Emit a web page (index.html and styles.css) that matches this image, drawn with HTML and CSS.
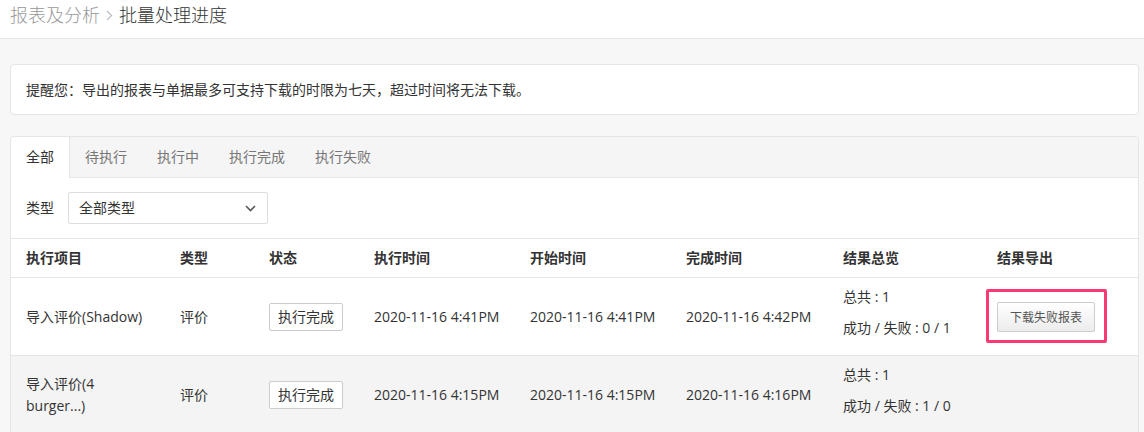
FILE: index.html
```html
<!DOCTYPE html>
<html lang="zh-CN">

<head>
    <meta charset="utf-8">
    <meta name="viewport" content="width=device-width, initial-scale=1">
    <title>批量处理进度</title>
    <link rel="stylesheet" href="styles.css">
</head>

<body>
    <div class="topbar">
        <span class="crumb">报表及分析</span>
        <svg class="crumb-sep" width="7" height="11" viewBox="0 0 7 11"><path d="M1 1l4.5 4.5L1 10" fill="none" stroke="#b8bcc4" stroke-width="1.2"/></svg>
        <span class="crumb current">批量处理进度</span>
    </div>

    <div class="main">
        <div class="notice">提醒您：导出的报表与单据最多可支持下载的时限为七天，超过时间将无法下载。</div>

        <div class="panel">
            <div class="tabs">
                <span class="tab active">全部</span>
                <span class="tab">待执行</span>
                <span class="tab">执行中</span>
                <span class="tab">执行完成</span>
                <span class="tab">执行失败</span>
            </div>

            <div class="filter">
                <span class="filter-label">类型</span>
                <div class="dropdown">
                    <span>全部类型</span>
                    <svg width="11" height="7" viewBox="0 0 11 7"><path d="M1 1l4.5 4.5L10 1" fill="none" stroke="#555" stroke-width="1.6"/></svg>
                </div>
            </div>

            <table class="jobs">
                <colgroup>
                    <col style="width:154px">
                    <col style="width:89px">
                    <col style="width:105px">
                    <col style="width:156px">
                    <col style="width:156px">
                    <col style="width:157px">
                    <col style="width:154px">
                    <col>
                </colgroup>
                <thead>
                    <tr>
                        <th>执行项目</th>
                        <th>类型</th>
                        <th>状态</th>
                        <th>执行时间</th>
                        <th>开始时间</th>
                        <th>完成时间</th>
                        <th>结果总览</th>
                        <th>结果导出</th>
                    </tr>
                </thead>
                <tbody>
                    <tr>
                        <td>导入评价(Shadow)</td>
                        <td>评价</td>
                        <td><span class="status">执行完成</span></td>
                        <td>2020-11-16 4:41PM</td>
                        <td>2020-11-16 4:41PM</td>
                        <td>2020-11-16 4:42PM</td>
                        <td>
                            <div class="sum">总共 : 1</div>
                            <div class="sum">成功 / 失败 : 0 / 1</div>
                        </td>
                        <td><span class="mark"><button class="btn">下载失败报表</button></span></td>
                    </tr>
                    <tr class="alt">
                        <td>导入评价(4 burger...)</td>
                        <td>评价</td>
                        <td><span class="status">执行完成</span></td>
                        <td>2020-11-16 4:15PM</td>
                        <td>2020-11-16 4:15PM</td>
                        <td>2020-11-16 4:16PM</td>
                        <td>
                            <div class="sum">总共 : 1</div>
                            <div class="sum">成功 / 失败 : 1 / 0</div>
                        </td>
                        <td></td>
                    </tr>
                </tbody>
            </table>
        </div>
    </div>
</body>

</html>
```

FILE: styles.css
```css
  * {
      box-sizing: border-box;
  }

  body {
      margin: 0;
      background: #f7f7f7;
      color: #333;
      font-family: "Open Sans", "Noto Sans CJK SC", sans-serif;
      font-size: 14px;
      line-height: 20px;
  }

  .topbar {
      display: flex;
      align-items: center;
      gap: 6px;
      height: 39px;
      padding: 0 10px 8px;
      background: #fff;
      border-bottom: 1px solid #e5e5e5;
  }

  .crumb {
      font-size: 18px;
      font-weight: 300;
      line-height: 24px;
      color: #999;
  }

  .crumb.current {
      color: #333;
  }

  .crumb-sep {
      margin: 1px 0 0;
  }

  .main {
      padding: 25px 5px 0 10px;
  }

  .notice {
      background: #fff;
      border: 1px solid #e5e5e5;
      border-radius: 4px;
      padding: 14px 15px;
      line-height: 21px;
      margin-bottom: 21px;
  }

  .panel {
      background: #fff;
      border: 1px solid #e5e5e5;
      border-radius: 4px 4px 0 0;
  }

  .tabs {
      display: flex;
      height: 41px;
      background: #f5f5f5;
      border-bottom: 1px solid #e5e5e5;
      border-radius: 4px 4px 0 0;
  }

  .tab {
      padding: 0 15px;
      line-height: 40px;
      color: #777;
  }

  .tab.active {
      height: 41px;
      background: #fff;
      color: #333;
      border-right: 1px solid #e5e5e5;
      border-radius: 4px 0 0 0;
  }

  .filter {
      display: flex;
      align-items: center;
      gap: 14px;
      padding: 14px 15px;
  }

  .dropdown {
      display: flex;
      align-items: center;
      justify-content: space-between;
      width: 200px;
      height: 32px;
      padding: 0 11px 0 10px;
      border: 1px solid #ddd;
      border-radius: 2px;
  }

  .jobs {
      width: 100%;
      table-layout: fixed;
      border-collapse: collapse;
  }

  .jobs th,
  .jobs td {
      text-align: left;
      border-top: 1px solid #e5e5e5;
      padding: 9px 15px;
  }

  .jobs th {
      font-weight: 600;
  }

  .jobs td {
      padding: 9px 15px 8px;
      line-height: 22px;
      vertical-align: middle;
  }

  .jobs tr.alt td {
      background: #f4f4f4;
  }

  .status {
      display: inline-block;
      padding: 2px 8px;
      line-height: 22px;
      border: 1px solid #ccc;
      border-radius: 2px;
      background: #fff;
  }

  .sum {
      line-height: 20px;
      margin-bottom: 9px;
  }

  .sum:first-child {
      margin-bottom: 11px;
  }

  .mark {
      position: relative;
      display: inline-block;
  }

  .mark::after {
      content: "";
      position: absolute;
      top: -13px;
      right: -12px;
      bottom: -11px;
      left: -11px;
      border: 3px solid #f93a73;
      border-radius: 2px;
  }

  .btn {
      display: block;
      height: 30px;
      padding: 0 12px;
      font-family: inherit;
      font-size: 12px;
      color: #555;
      border: 1px solid #ccc;
      border-radius: 2px;
      background: linear-gradient(#fff, #ececec);
  }
```
